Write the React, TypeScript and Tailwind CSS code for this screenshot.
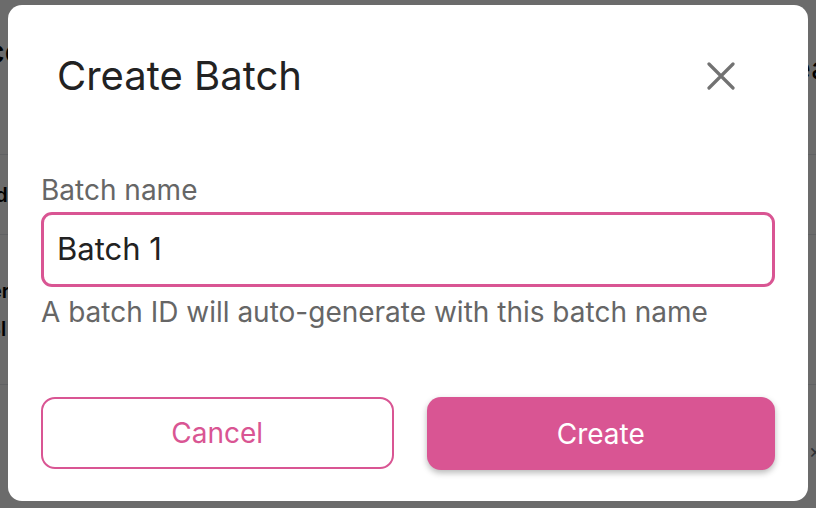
import React from "react";

function BackgroundPage() {
    return (
        <div className="h-[508px] w-[816px] overflow-hidden bg-white text-black font-['Inter','Liberation_Sans',sans-serif]">
            <div className="flex h-[155px] items-start justify-between border-b border-gray-200 pt-[28px]">
                <span className="-ml-[14px] text-[32px] font-semibold">ce</span>
                <span className="-mr-[12px] pt-[18px] text-[30px]">ea</span>
            </div>
            <div className="flex h-[80px] items-center justify-between border-b border-gray-200">
                <span className="-ml-[10px] text-[20px] font-semibold">ld</span>
            </div>
            <div className="flex h-[150px] flex-col justify-center gap-[8px] border-b border-gray-200">
                <span className="-ml-[10px] text-[20px] font-semibold">er</span>
                <span className="-ml-[12px] text-[20px] font-semibold">Sl</span>
            </div>
            <div className="flex h-[123px] items-end justify-end pb-[42px]">
                <span className="-mr-[6px] text-[20px] text-gray-500">×</span>
            </div>
        </div>
    );
}

function CloseIcon() {
    return (
        <svg width="28" height="28" viewBox="0 0 28 28" fill="none">
            <path d="M2 2 L26 26 M26 2 L2 26" stroke="#727272" strokeWidth="3.2" strokeLinecap="round" />
        </svg>
    );
}

export default function App() {
    return (
        <div className="relative h-[508px] w-[816px] overflow-hidden">
            <BackgroundPage />
            <div className="absolute inset-0 bg-black/[0.58]" />
            <div className="absolute left-[8px] top-[5px] flex h-[496px] w-[800px] flex-col rounded-[14px] bg-white px-[33px] font-['Inter','Liberation_Sans',sans-serif]">
                <div className="flex items-center justify-between pl-[16px] pr-[40px] pt-[47px]">
                    <h1 className="text-[40px] leading-[48px] text-[#222222]">Create Batch</h1>
                    <button type="button" className="flex h-[28px] w-[28px] items-center justify-center">
                        <CloseIcon />
                    </button>
                </div>
                <label className="mt-[73px] text-[28px] leading-[34px] text-[#666666]">Batch name</label>
                <div className="mt-[5px] flex h-[75px] items-center rounded-[11px] border-[3px] border-[#d95593] px-[13px]">
                    <input
                        className="w-full bg-transparent text-[31px] text-[#222222] outline-none"
                        defaultValue="Batch 1"
                    />
                </div>
                <p className="mt-[8px] text-[28px] leading-[34px] text-[#666666]">A batch ID will auto-generate with this batch name</p>
                <div className="mt-[68px] flex gap-[33px]">
                    <button
                        type="button"
                        className="flex h-[72px] flex-1 items-center justify-center rounded-[14px] border-2 border-[#d95593] text-[28px] text-[#d95593]"
                    >
                        Cancel
                    </button>
                    <button
                        type="button"
                        className="flex h-[73px] flex-1 items-center justify-center rounded-[14px] bg-[#d95593] text-[28px] text-white shadow-[0_3px_6px_rgba(0,0,0,0.28)]"
                    >
                        Create
                    </button>
                </div>
            </div>
        </div>
    );
}
